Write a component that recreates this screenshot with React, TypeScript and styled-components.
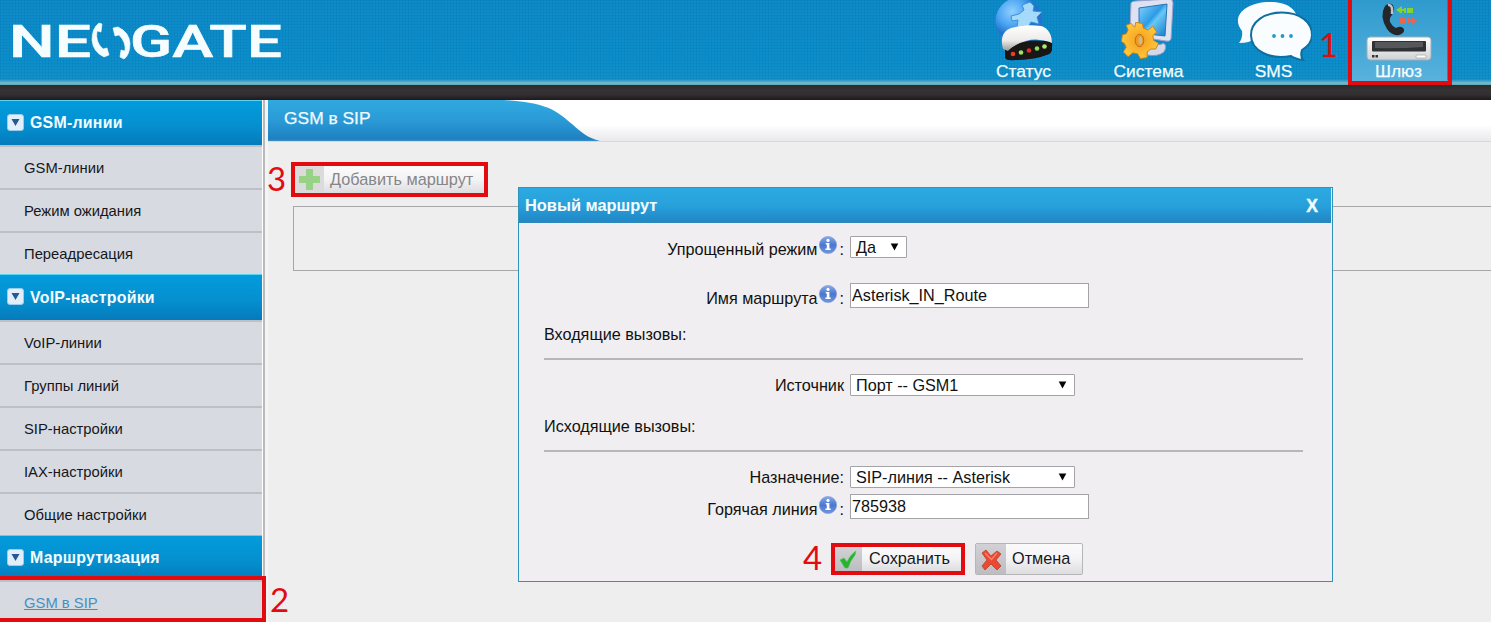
import React from "react";
import styled, { createGlobalStyle, css } from "styled-components";

const Global = createGlobalStyle`
  * { box-sizing: border-box; }
  html, body { margin: 0; padding: 0; overflow: hidden; }
  body { font-family: "Liberation Sans", Arial, sans-serif; background: #efeeef; color: #111; }
`;

const Page = styled.div`
  width: 100%;
  height: 622px;
  display: flex;
  flex-direction: column;
  overflow: hidden;
`;

const Header = styled.header`
  height: 85px;
  flex: none;
  display: flex;
  justify-content: space-between;
  padding-right: 30px;
  background:
    linear-gradient(transparent 79px, #3fa0c8 81px, #79bccb 83px, #5fa5b6 85px),
    repeating-linear-gradient(90deg, rgba(0, 70, 130, 0.09) 0 1px, transparent 1px 3px),
    repeating-linear-gradient(0deg, rgba(0, 70, 130, 0.07) 0 1px, transparent 1px 3px),
    linear-gradient(#0e8ac8, #0b8fcb 70%, #1391c8);
`;

const Logo = styled.svg`
  display: block;
  margin-left: 10px;
`;

const DarkBar = styled.div`
  height: 15px;
  flex: none;
  background: linear-gradient(#2c2c2e, #343233 30%, #322f31 65%, #1d191e);
`;

const Nav = styled.nav`
  display: flex;
`;

const NavItem = styled.a<{ $active?: boolean }>`
  position: relative;
  width: 125px;
  height: 82px;
  display: flex;
  flex-direction: column;
  align-items: center;
  color: #f4fdff;
  font-size: 17.4px;
  line-height: 20px;
  -webkit-text-stroke: 0.25px #f4fdff;
  svg { display: block; height: 62px; flex: none; }
  ${(p) => p.$active && css`
    background: linear-gradient(#2f9ace, #58b2dc) center / 96px 100% no-repeat;
  `}
`;

const NavLabel = styled.span`
  margin-top: -1px;
`;

const Columns = styled.div`
  flex: 1;
  display: flex;
  min-height: 0;
`;

const Sidebar = styled.aside`
  width: 268px;
  flex: none;
  padding-right: 6px;
  background: linear-gradient(90deg, #fff 0 263px, #b9b9bc 263px 265px, #f4f4f5 265px);
`;

const Group = styled.div<{ $h: number }>`
  height: ${(p) => p.$h}px;
  display: flex;
  align-items: center;
  gap: 6px;
  padding: 0 0 0 7px;
  border-top: 1px solid #59d3f2;
  background: linear-gradient(#029bdc, #0590d0 55%, #047bbb);
  color: #f4fdff;
  font-weight: bold;
  font-size: 15.9px;
  letter-spacing: 0.25px;
  svg { margin-bottom: 2px; }
`;

const Item = styled.div`
  height: 43px;
  display: flex;
  align-items: center;
  padding: 0 0 0 24px;
  border-top: 2px solid #bfc0c4;
  background: #d7dbe1;
  color: #16161c;
  font-size: 14.8px;
`;

const ItemLink = styled.a`
  color: #468fc4;
  text-decoration: underline;
`;

const Frame = styled.div<{ $x: number; $y: number; $w: number; $h: number }>`
  position: absolute;
  left: ${(p) => p.$x}px;
  top: ${(p) => p.$y}px;
  width: ${(p) => p.$w}px;
  height: ${(p) => p.$h}px;
  border: 4px solid #e20c10;
`;

const Mark = styled.span<{ $x: number; $y: number }>`
  position: absolute;
  left: ${(p) => p.$x}px;
  top: ${(p) => p.$y}px;
  font: 33px/34px Lato, "Open Sans", sans-serif;
  -webkit-text-stroke: 0;
  color: #e20c10;
`;

const Main = styled.main`
  flex: 1;
  min-width: 0;
`;

const Strip = styled.div`
  height: 42px;
  border-bottom: 1px solid #d9d8da;
  background: linear-gradient(#fff 60%, #e9e8ec);
`;

const Tab = styled.div`
  width: 334px;
  height: 41px;
  padding: 8px 0 0 16px;
  font-size: 17.4px;
  line-height: 20px;
  color: #f1fbff;
  -webkit-text-stroke: 0.25px #f1fbff;
  background: linear-gradient(#30a9e0, #2a9ad6 50%, #1f80c0 95%, #3f8fc4);
  clip-path: path("M0 0 H236 C284 3 290 13 304 24 C314 33 320 38 332 41 H0 Z");
`;

const Content = styled.div`
  padding: 20px 0 0 23px;
`;

const IconButton = styled.button<{ $w: number; $h: number; $faded?: boolean; $marked?: boolean }>`
  width: ${(p) => p.$w}px;
  height: ${(p) => p.$h}px;
  display: flex;
  align-items: stretch;
  padding: 0;
  overflow: hidden;
  border: ${(p) => (p.$marked ? "4px solid #e20c10" : "1px solid #b6b6b8")};
  border-radius: ${(p) => (p.$marked ? 0 : 2)}px;
  background: linear-gradient(#fbfbfc, #f3f3f5 50%, #dddde0);
  font-family: inherit;
  font-size: 16.3px;
  color: ${(p) => (p.$faded ? "#858588" : "#18181c")};
`;

const IconCell = styled.span<{ $w: number; $faded?: boolean }>`
  width: ${(p) => p.$w}px;
  flex: none;
  display: flex;
  align-items: center;
  justify-content: center;
  background: ${(p) => (p.$faded ? "#dbdbdc" : "linear-gradient(#d2d2d6, #bcbcc1)")};
`;

const ButtonText = styled.span<{ $pad: number }>`
  padding: 0 0 1px ${(p) => p.$pad}px;
  align-self: center;
  white-space: nowrap;
`;

const EmptyTable = styled.div`
  height: 65px;
  margin: 9px -4px 0 2px;
  border: 1px solid #a6a6ab;
`;

const Dialog = styled.section`
  position: absolute;
  left: 518px;
  top: 187px;
  width: 815px;
  height: 395px;
  border: 1px solid #2f93ba;
  background: #f0eef0;
`;

const TitleBar = styled.div`
  height: 35px;
  margin-right: 1px;
  display: flex;
  align-items: center;
  justify-content: space-between;
  padding: 0 13px 0 6px;
  background: linear-gradient(#2caae2, #27a1db 50%, #218ac9 90%, #2f86b8);
  color: #f4fdff;
  font-weight: bold;
  font-size: 16.4px;
`;

const Close = styled.span`
  font-size: 17.5px;
  line-height: 20px;
  -webkit-text-stroke: 0.4px #f4fdff;
`;

const Row = styled.div<{ $h: number; $top?: number }>`
  height: ${(p) => p.$h}px;
  margin-top: ${(p) => p.$top ?? 0}px;
  display: flex;
  align-items: center;
  gap: 6px;
  font-size: 16.2px;
  white-space: nowrap;
`;

const Label = styled.label<{ $drop?: number }>`
  width: 325px;
  display: flex;
  justify-content: flex-end;
  align-items: center;
  padding-top: ${(p) => p.$drop ?? 0}px;
  svg { margin: -9px 3px 0 1px; flex: none; }
`;

const Select = styled.div<{ $w: number }>`
  width: ${(p) => p.$w}px;
  height: 22px;
  display: flex;
  align-items: center;
  justify-content: space-between;
  padding: 0 7px 0 5px;
  border: 1px solid #a3a3a8;
  border-radius: 1px;
  background: #fff;
`;

const Field = styled.input`
  width: 239px;
  height: 25px;
  padding: 0 1px 1px;
  border: 1px solid #a3a3a8;
  border-radius: 0;
  background: #fff;
  color: #111;
  font: 16.2px "Liberation Sans", Arial, sans-serif;
`;

const Section = styled.div<{ $h: number; $pad: number }>`
  height: ${(p) => p.$h}px;
  margin: 0 29px 0 25px;
  padding-top: ${(p) => p.$pad}px;
  border-bottom: 2px solid #b7b6b9;
  font-size: 16.2px;
  line-height: 20px;
`;

const Actions = styled.div`
  display: flex;
  gap: 10px;
  margin: 24px 0 0 312px;
`;

const Toggle = () => (
  <svg width="17" height="17" viewBox="0 0 17 17">
    <rect x=".5" y=".5" width="16" height="16" rx="2.5" fill="#e3eefb" stroke="#9cccec" />
    <path d="M4.5 5h8l-4 7z" fill="#225a94" />
  </svg>
);

const Arrow = () => (
  <svg width="9" height="8" viewBox="0 0 9 8"><path d="M.7.5h7.6L4.5 7.5z" fill="#050505" /></svg>
);

const Info = () => (
  <svg width="18" height="18" viewBox="0 0 18 18">
    <defs>
      <linearGradient id="inf" x2="0" y2="1"><stop stopColor="#88a9e8" /><stop offset=".5" stopColor="#4a77cf" /><stop offset="1" stopColor="#7296dc" /></linearGradient>
    </defs>
    <circle cx="9" cy="9" r="8.6" fill="url(#inf)" stroke="#7898dc" strokeWidth=".6" />
    <circle cx="9" cy="4.4" r="1.6" fill="#fff" />
    <path d="M6.7 7h3.7v5.5h1.3V14H6.4v-1.5h1.4v-4H6.7z" fill="#fff" />
  </svg>
);

const StatusIcon = () => (
  <svg width="66" height="62" viewBox="0 0 66 62">
    <defs>
      <radialGradient id="globe" cx=".35" cy=".3"><stop stopColor="#8fd0ff" /><stop offset=".6" stopColor="#4ba4f2" /><stop offset="1" stopColor="#2274cf" /></radialGradient>
      <linearGradient id="dome" x2="0" y2="1"><stop stopColor="#fff" /><stop offset=".6" stopColor="#eceae9" /><stop offset="1" stopColor="#9b9998" /></linearGradient>
    </defs>
    <circle cx="28" cy="21" r="23.500" fill="url(#globe)" />
    <path d="M31 5l8-3 4 4-1 5 9 1-5 5 2 7-8-2-3 5-5-1-6 1 1-7-6 1-1-5 8-2 5-4z" fill="#a5dafb" stroke="#3d91d8" />
    <path d="M14 44L14 58Q16 61 24 60Q44 60 58 54Q62 52 61 40z" fill="#181716" />
    <path d="M12 49C9 38 12 31 20 28Q34 24 50 26C58 28 61 36 61 43Q38 33 17 51z" fill="url(#dome)" />
    <path d="M15 53Q30 36 59 42L61 50Q60 54 55 55Q40 60 17 60z" fill="#181716" />
    <circle cx="22" cy="54" r="2.300" fill="#ee3b25" /><circle cx="30" cy="52.500" r="2.300" fill="#9de361" /><circle cx="38" cy="50.500" r="2.300" fill="#e42b25" /><circle cx="46" cy="48.500" r="2.300" fill="#8edc59" /><circle cx="53.500" cy="46.500" r="2.300" fill="#abed68" />
  </svg>
);

const SystemIcon = () => (
  <svg width="66" height="62" viewBox="0 0 66 62">
    <defs>
      <linearGradient id="screen" x2="1" y2="1"><stop stopColor="#86d6fa" /><stop offset=".45" stopColor="#2c9be5" /><stop offset=".55" stopColor="#67c8f5" /><stop offset="1" stopColor="#1479cf" /></linearGradient>
      <radialGradient id="gear"><stop stopColor="#f49c19" /><stop offset="1" stopColor="#ffc73d" /></radialGradient>
    </defs>
    <path d="M31 41Q44 47 47 43Q52 45 48 52Q42 57 31 55z" fill="#d3d8ea" stroke="#8a96bc" />
    <path d="M15 3Q16 1 20 1L53-1Q57-1 57 3L55 39Q54 42 50 41L18 36Q14 35 14 31z" fill="#dde1f1" stroke="#9da3c8" />
    <path d="M23 8L51 4 49 36 23 33z" fill="url(#screen)" stroke="#2c72b5" />
    <g transform="translate(23.500 40.500) scale(.95)">
      <path d="M-4-19L3-18 4-13 9-11 14-15 18-9 14-5 15 0 20 3 17 9 12 9 8 12 8 18 1 19-2 14-7 13-12 17-17 12-14 7-16 3-19 1-18-6-14-7-12-11-14-16-9-18-5-14z" fill="url(#gear)" stroke="#c98118" strokeLinejoin="round" />
      <ellipse rx="4.500" ry="6.500" fill="#f4981b" stroke="#b56b16" /><ellipse cx="1" rx="2" ry="4" fill="#c1bca1" />
    </g>
  </svg>
);

const SmsIcon = () => (
  <svg width="76" height="62" viewBox="0 0 76 62">
    <path d="M34 2C52 2 62 10 61 21C60 33 49 36 35 36Q25 37 18 39Q14 43 3 43Q7 38 6 31C-6 16 10 2 34 2z" fill="#fafdff" />
    <path d="M46 12.500C64 12.500 76 22 76 35Q76 44 66 50Q64 56 67 60Q59 59 55 56C34 60 15 51 15 35C15 22 28 12.500 46 12.500z" fill="#fafdff" stroke="#0d6f9f" strokeWidth="2" />
    <circle cx="38" cy="36" r="1.900" fill="#209bc9" /><circle cx="46.500" cy="36" r="1.900" fill="#209bc9" /><circle cx="55" cy="36" r="1.900" fill="#209bc9" />
  </svg>
);

const GatewayIcon = () => (
  <svg width="66" height="62" viewBox="0 0 66 62">
    <defs><linearGradient id="box" x2="0" y2="1"><stop stopColor="#fff" /><stop offset="1" stopColor="#cfd2d5" /></linearGradient></defs>
    <path d="M19 6Q23 2 27 5Q29 10 26 15Q23 18 24 22Q26 26 30 28Q35 25 38 29Q39 33 33 35Q26 36 21 29Q13 16 19 6z" fill="#25262a" />
    <path d="M22 5Q27 4 26 14" stroke="#c1c5cb" strokeWidth="2.500" fill="none" />
    <path d="M30 10l6-4v3h3v2h-3v3zM38 8h2v5h-2zM41 8h6v5h-6z" fill="#86d32b" />
    <path d="M51 20.500l-6-4v3h-2v2h2v4zM34 18h6v5h-6zM41 18h2v5h-2z" fill="#ee6250" />
    <rect x="1" y="37" width="64" height="23" rx="3" fill="url(#box)" stroke="#9eaeb8" />
    <rect x="6" y="41" width="54" height="10.500" rx="1" fill="#303134" />
    <path d="M9 42h48v5Q30 49 9 48z" fill="#56575b" />
    <rect x="6" y="55" width="2.500" height="2.500" fill="#333" /><rect x="9.500" y="55" width="2.500" height="2.500" fill="#333" />
    <rect x="50" y="55" width="10" height="3" rx="1" fill="#fff" stroke="#a1a3a5" strokeWidth=".7" />
  </svg>
);

const menu = [
  { title: "GSM-линии", h: 45, items: ["GSM-линии", "Режим ожидания", "Переадресация"] },
  { title: "VoIP-настройки", h: 46, items: ["VoIP-линии", "Группы линий", "SIP-настройки", "IAX-настройки", "Общие настройки"] },
  { title: "Маршрутизация", h: 45, items: [] },
];

export default function App() {
  return (
    <Page>
      <Global />
      <Header>
        <Logo width="280" height="82" viewBox="10 0 280 82" fill="#f6fdff" stroke="#f6fdff" strokeWidth=".6">
          <text x="9" y="57" fontFamily="Roboto, sans-serif" fontWeight="500" fontSize="44.500" textLength="82" lengthAdjust="spacingAndGlyphs">NE</text>
          <path d="M99 23l3 1-1 8-4-1Q95 42 103 49l4-1 2 7-5 2Q93 52 92 40Q92 28 99 23z" />
          <path d="M113 28l5-1Q129 32 130 43Q130 55 124 59l-4-2 1-7 4 1Q126 42 119 35l-4 1z" />
          <text x="130" y="57" fontFamily="Roboto, sans-serif" fontWeight="500" fontSize="44.500" textLength="152" lengthAdjust="spacingAndGlyphs">GATE</text>
        </Logo>
        <Nav>
          <NavItem><StatusIcon /><NavLabel>Статус</NavLabel></NavItem>
          <NavItem><SystemIcon /><NavLabel>Система</NavLabel></NavItem>
          <NavItem><SmsIcon /><NavLabel>SMS</NavLabel></NavItem>
          <NavItem $active>
            <GatewayIcon /><NavLabel>Шлюз</NavLabel>
            <Frame $x={12} $y={-4} $w={104} $h={89} />
            <Mark $x={-17} $y={27}>1</Mark>
          </NavItem>
        </Nav>
      </Header>
      <DarkBar />
      <Columns>
        <Sidebar>
          {menu.map((g) => (
            <React.Fragment key={g.title}>
              <Group $h={g.h}><Toggle />{g.title}</Group>
              {g.items.map((t) => <Item key={t}>{t}</Item>)}
            </React.Fragment>
          ))}
          <Item><ItemLink>GSM в SIP</ItemLink></Item>
        </Sidebar>
        <Main>
          <Strip><Tab>GSM в SIP</Tab></Strip>
          <Content>
            <IconButton $w={197} $h={35} $faded $marked>
              <IconCell $w={29} $faded>
                <svg width="23" height="23" viewBox="0 0 23 23"><path d="M8 1h7v7h7v7h-7v7H8v-7H1V8h7z" fill="#98d287" /></svg>
              </IconCell>
              <ButtonText $pad={6}>Добавить маршрут</ButtonText>
            </IconButton>
            <EmptyTable />
          </Content>
        </Main>
      </Columns>
      <Frame $x={-4} $y={576} $w={270} $h={46} />
      <Mark $x={270} $y={582}>2</Mark>
      <Mark $x={267} $y={161}>3</Mark>
      <Dialog>
        <TitleBar><span>Новый маршрут</span><Close>X</Close></TitleBar>
        <Row $h={48}>
          <Label $drop={5}>Упрощенный режим<Info />:</Label>
          <Select $w={57}>Да<Arrow /></Select>
        </Row>
        <Row $h={49}>
          <Label $drop={5}>Имя маршрута<Info />:</Label>
          <Field defaultValue="Asterisk_IN_Route" />
        </Row>
        <Section $h={40} $pad={4}>Входящие вызовы:</Section>
        <Row $h={50}>
          <Label>Источник</Label>
          <Select $w={225}>Порт -- GSM1<Arrow /></Select>
        </Row>
        <Section $h={42} $pad={6}>Исходящие вызовы:</Section>
        <Row $h={22} $top={14}>
          <Label>Назначение:</Label>
          <Select $w={225}>SIP-линия -- Asterisk<Arrow /></Select>
        </Row>
        <Row $h={25} $top={6}>
          <Label $drop={5}>Горячая линия<Info />:</Label>
          <Field defaultValue="785938" />
        </Row>
        <Actions>
          <IconButton $w={134} $h={32} $marked>
            <IconCell $w={27}>
              <svg width="20" height="20" viewBox="0 0 20 20"><path d="M1 11l4-2 3 4Q11 6 17 2L16 6Q11 12 9 19H6z" fill="#28b32c" stroke="#4bc451" strokeWidth=".6" /></svg>
            </IconCell>
            <ButtonText $pad={7}>Сохранить</ButtonText>
          </IconButton>
          <IconButton $w={108} $h={32}>
            <IconCell $w={30}>
              <svg width="21" height="21" viewBox="0 0 21 21"><path d="M1 4l4-3 5 6 6-5 4 3-5 6 5 6-4 4-6-6-6 6-3-4 5-6z" fill="#ea4a31" stroke="#bf3d2b" strokeWidth=".8" /><path d="M4 4l7 7M16 4l-6 7" stroke="#f8836a" strokeWidth="1.500" /></svg>
            </IconCell>
            <ButtonText $pad={6}>Отмена</ButtonText>
          </IconButton>
        </Actions>
      </Dialog>
      <Mark $x={803} $y={540}>4</Mark>
    </Page>
  );
}
